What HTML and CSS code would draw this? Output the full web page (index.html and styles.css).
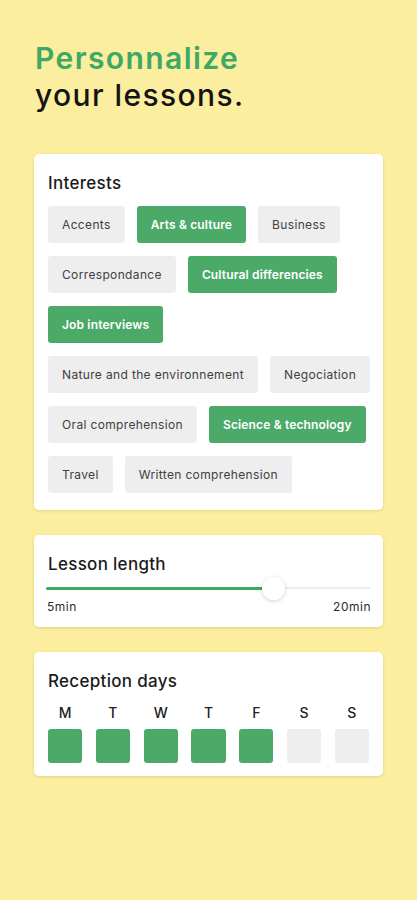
FILE: index.html
```html
<!DOCTYPE html>
<html lang="en">
<head>
<meta charset="utf-8">
<title>Personnalize your lessons</title>
<link rel="stylesheet" href="styles.css">
</head>
<body>
<main class="page">
  <h1 class="title"><span class="title-accent">Personnalize</span><br>your lessons.</h1>

  <section class="card card-interests">
    <h2 class="card-title">Interests</h2>
    <div class="chips">
      <span class="chip">Accents</span>
      <span class="chip chip-on">Arts &amp; culture</span>
      <span class="chip">Business</span>
      <span class="chip">Correspondance</span>
      <span class="chip chip-on">Cultural differencies</span>
      <span class="chip chip-on">Job interviews</span>
      <span class="chip">Nature and the environnement</span>
      <span class="chip">Negociation</span>
      <span class="chip">Oral comprehension</span>
      <span class="chip chip-on">Science &amp; technology</span>
      <span class="chip">Travel</span>
      <span class="chip">Written comprehension</span>
    </div>
  </section>

  <section class="card card-slider">
    <h2 class="card-title">Lesson length</h2>
    <div class="slider">
      <div class="track">
        <div class="track-fill" style="width: 70%"></div>
        <div class="thumb" style="left: 70%"></div>
      </div>
    </div>
    <div class="slider-labels">
      <span>5min</span>
      <span>20min</span>
    </div>
  </section>

  <section class="card card-days">
    <h2 class="card-title">Reception days</h2>
    <div class="days">
      <div class="day"><span class="day-letter">M</span><span class="day-box day-on"></span></div>
      <div class="day"><span class="day-letter">T</span><span class="day-box day-on"></span></div>
      <div class="day"><span class="day-letter">W</span><span class="day-box day-on"></span></div>
      <div class="day"><span class="day-letter">T</span><span class="day-box day-on"></span></div>
      <div class="day"><span class="day-letter">F</span><span class="day-box day-on"></span></div>
      <div class="day"><span class="day-letter">S</span><span class="day-box"></span></div>
      <div class="day"><span class="day-letter">S</span><span class="day-box"></span></div>
    </div>
  </section>
</main>
</body>
</html>
```

FILE: styles.css
```css
* { box-sizing: border-box; }

html, body {
  margin: 0;
  padding: 0;
}

body {
  background: #fcee9f;
  font-family: Inter, "Noto Sans", "Liberation Sans", sans-serif;
  color: #1d1d1d;
  min-height: 900px;
}

.page {
  padding: 40px 34px 40px 34px;
  display: flex;
  flex-direction: column;
  gap: 25px;
}

.title {
  margin: 0 0 15px 1px;
  font-size: 30px;
  line-height: 37px;
  font-weight: 500;
  color: #141414;
  letter-spacing: 1.4px;
}

.title-accent {
  color: #3ea865;
  font-weight: 600;
}

.card {
  background: #ffffff;
  border-radius: 5px;
  padding: 17px 14px 17px 14px;
  box-shadow: 0 1px 3px rgba(150, 130, 40, 0.25);
}

.card-interests {
  padding-right: 11px;
}

.card-title {
  margin: 0 0 11px 0;
  font-size: 17px;
  line-height: 24px;
  font-weight: 500;
  color: #1b1b1b;
  letter-spacing: 0.3px;
}

.chips {
  display: flex;
  flex-wrap: wrap;
  column-gap: 12px;
  row-gap: 13px;
}

.chip {
  display: inline-flex;
  align-items: center;
  height: 37px;
  padding: 0 14px;
  background: #eeeeee;
  border-radius: 3px;
  font-size: 12px;
  letter-spacing: 0.35px;
  font-weight: 400;
  color: #404040;
  white-space: nowrap;
}

.chip-on {
  background: #4caa69;
  color: #ffffff;
  font-weight: 600;
  letter-spacing: 0.15px;
}

.card-slider {
  padding-bottom: 13px;
}

.card-slider .card-title {
  margin-bottom: 1px;
}

.slider {
  height: 22px;
  display: flex;
  align-items: center;
  margin: 0 -2px;
}

.track {
  position: relative;
  width: 100%;
  height: 2px;
  background: #ececec;
  border-radius: 1px;
}

.track-fill {
  height: 3px;
  margin-top: -0.5px;
  background: #3ea865;
  border-radius: 2px;
}

.thumb {
  position: absolute;
  top: 50%;
  width: 23px;
  height: 23px;
  margin: -11.5px 0 0 -11.5px;
  border-radius: 50%;
  background: #ffffff;
  box-shadow: 0 1px 4px rgba(0, 0, 0, 0.18);
}

.slider-labels {
  display: flex;
  justify-content: space-between;
  margin: 1px -2px 0 -1px;
  font-size: 12px;
  letter-spacing: 0.5px;
  line-height: 14px;
  color: #2a2a2a;
}

.card-days {
  padding-bottom: 13px;
}

.card-days .card-title {
  margin-bottom: 11px;
}

.days {
  display: grid;
  grid-template-columns: repeat(7, 1fr);
  column-gap: 13.5px;
}

.day {
  display: flex;
  flex-direction: column;
  align-items: center;
  gap: 7px;
}

.day-letter {
  font-size: 14px;
  line-height: 18px;
  font-weight: 500;
  color: #222222;
}

.day-box {
  display: block;
  width: 100%;
  height: 34px;
  border-radius: 3px;
  background: #eeeeee;
}

.day-on {
  background: #4caa69;
}
```
